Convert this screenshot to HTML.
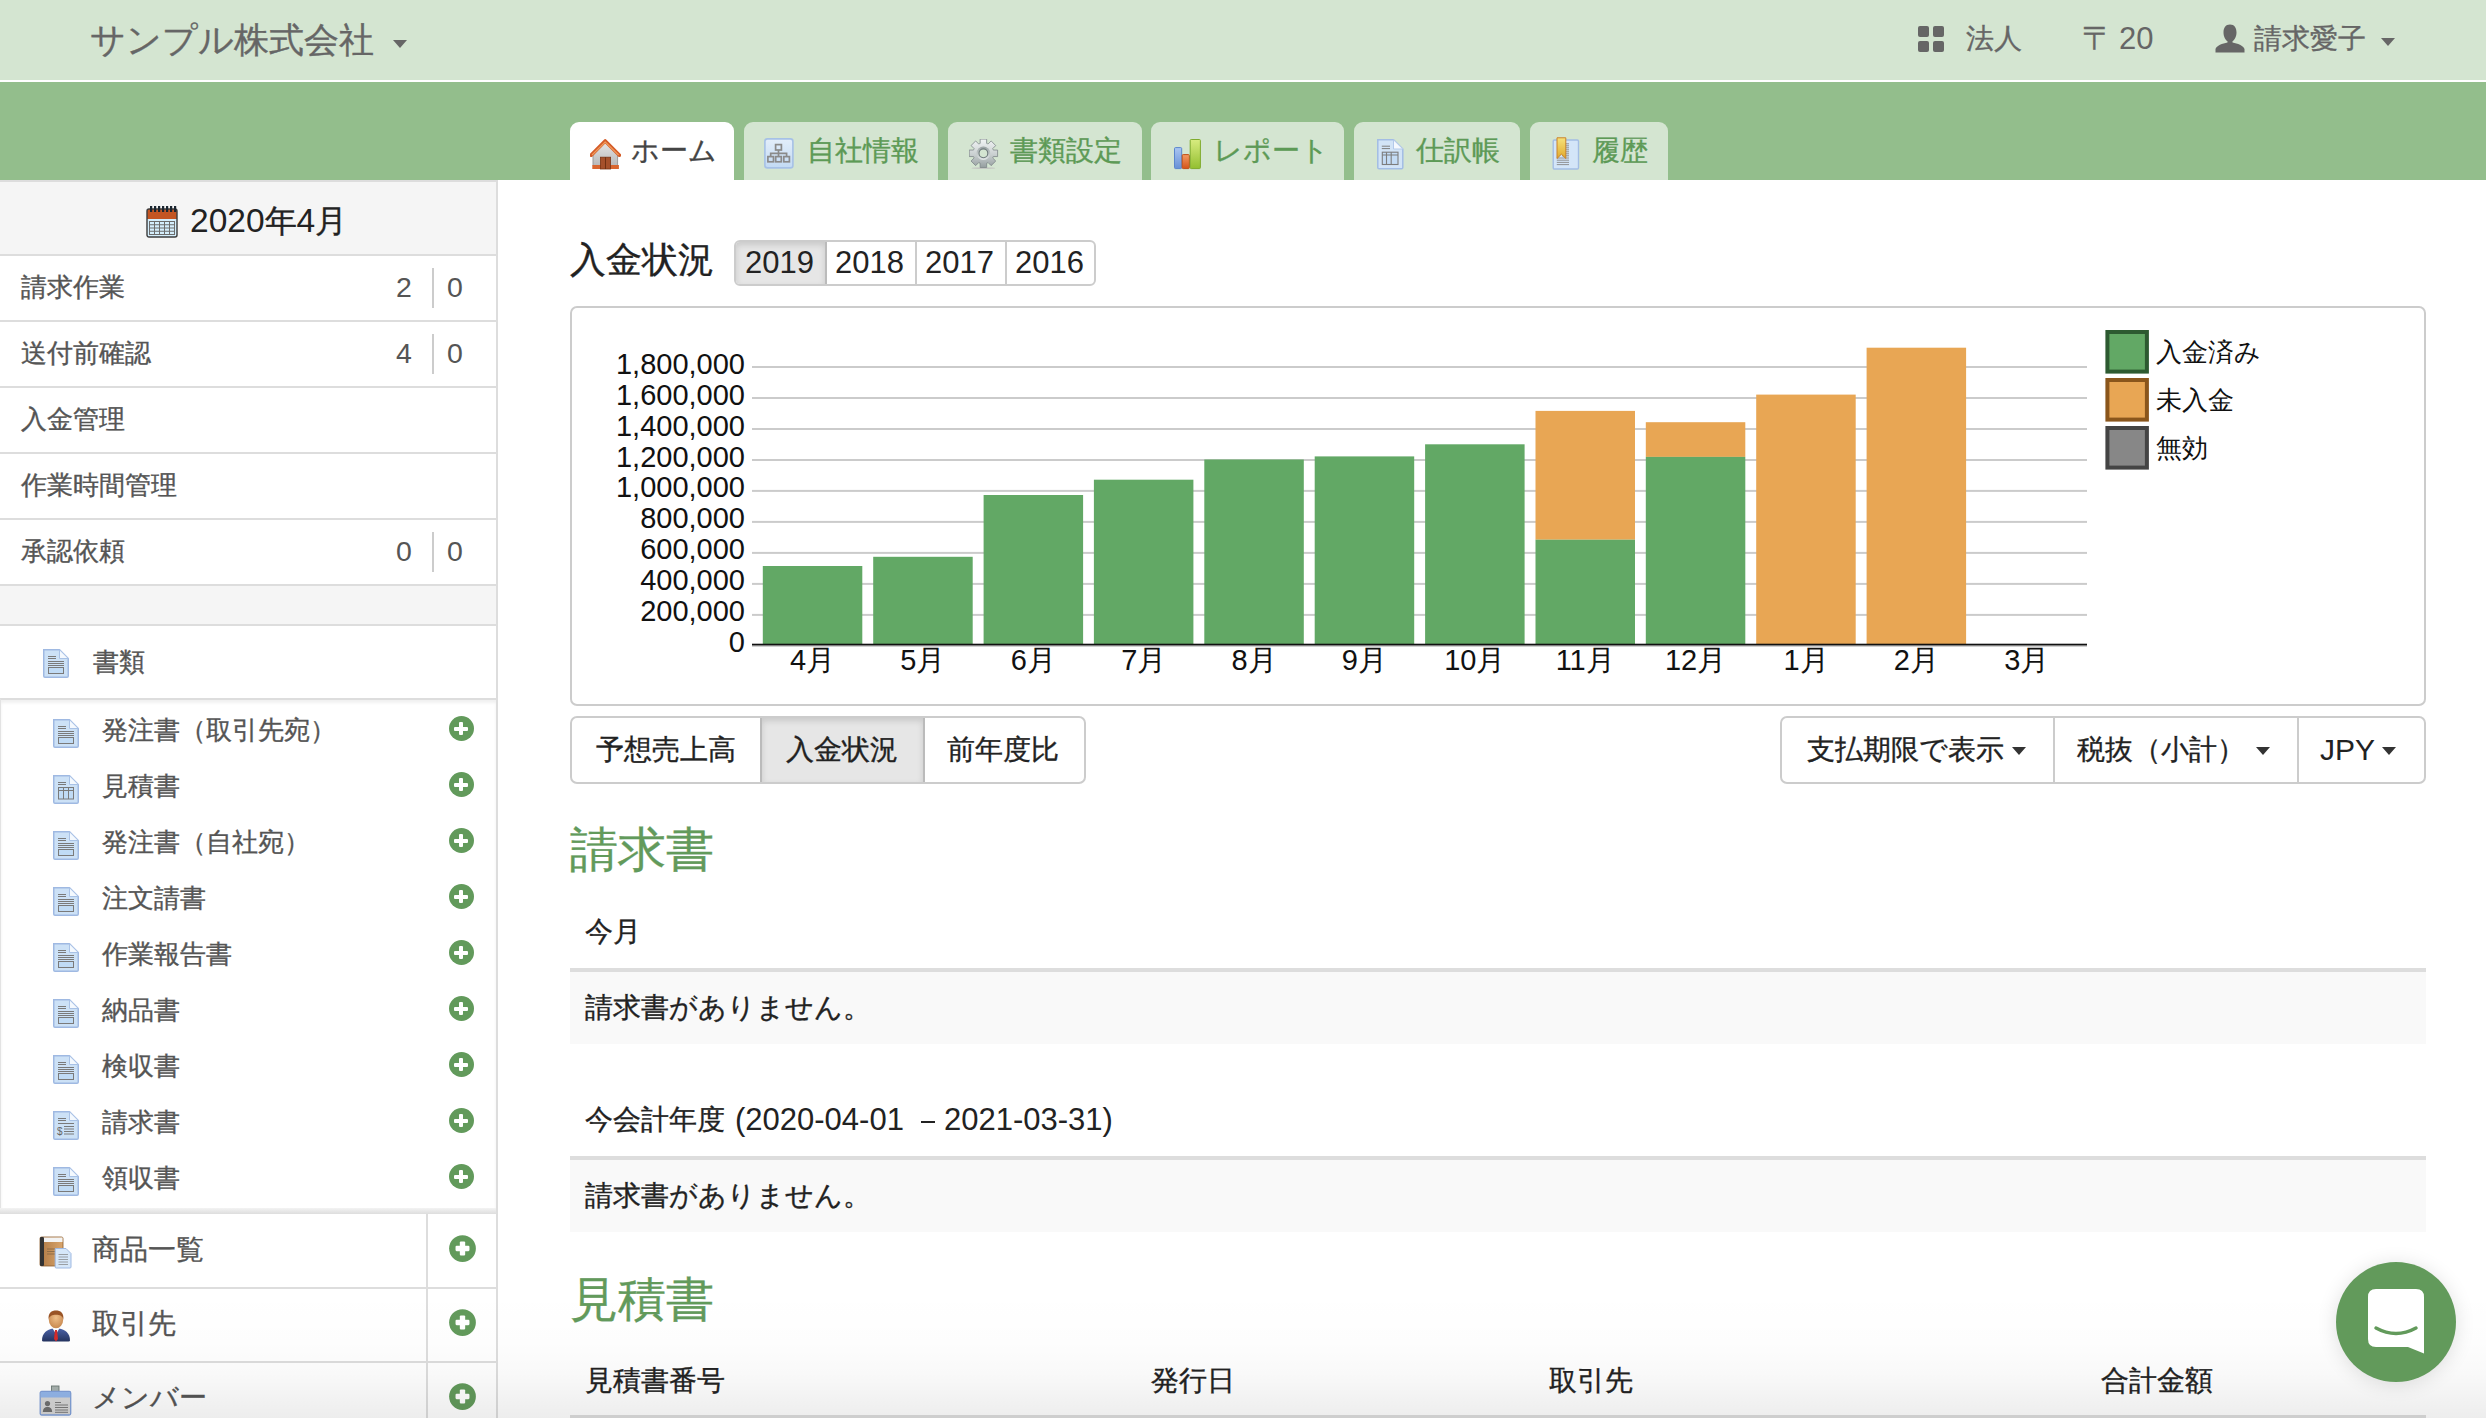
<!DOCTYPE html>
<html><head><meta charset="utf-8">
<style>
*{box-sizing:border-box;margin:0;padding:0}
html,body{width:2486px;height:1418px;overflow:hidden;background:#fff}
body{position:relative;font-family:"Liberation Sans",sans-serif;font-size:28px;color:#333;-webkit-text-stroke:0.35px currentColor}
.abs{position:absolute}
.t{position:absolute;white-space:nowrap;line-height:1}
.tab{position:absolute;top:122px;height:58px;background:#d4e5d1;border-radius:9px 9px 0 0}
.tab.on{background:#fff}
.tabtxt{position:absolute;top:136px;font-size:28px;line-height:30px;color:#5d9a56;white-space:nowrap}
.caret{position:absolute;width:0;height:0;border-left:7.5px solid transparent;border-right:7.5px solid transparent;border-top:8px solid #666}
.hr{position:absolute;left:0;height:2px;background:#ddd}
.srow{position:absolute;left:21px;font-size:26px;line-height:30px;color:#555;white-space:nowrap}
.plus{position:absolute;width:25px;height:25px;border-radius:50%;background:#629a5b}
.plus:before{content:"";position:absolute;left:5.6px;top:10.4px;width:13.6px;height:4.3px;background:#fff;border-radius:1px}
.plus:after{content:"";position:absolute;left:10.3px;top:5.9px;width:4.3px;height:13.3px;background:#fff;border-radius:1px}
.plus.big{transform:scale(1.07)}
.yr{font-size:31px;line-height:30px;color:#222;-webkit-text-stroke:0}
.n{-webkit-text-stroke:0}
.btxt{font-size:28px;line-height:30px;color:#222}
.ax{font-family:"Liberation Sans",sans-serif;font-size:29px;fill:#111;-webkit-text-stroke:0}
.lg{font-family:"Liberation Sans",sans-serif;font-size:26px;fill:#111}
</style></head>
<body>
<div class="abs" style="left:0;top:0;width:2486px;height:80px;background:#d4e5d1"></div>
<div class="abs" style="left:0;top:80px;width:2486px;height:2px;background:#fff"></div>
<div class="abs" style="left:0;top:82px;width:2486px;height:98px;background:#93be8c"></div>
<div class="t" style="left:90px;top:20px;font-size:35px;line-height:40px;color:#666">サンプル株式会社</div>
<div class="caret" style="left:393px;top:40px"></div>
<div class="abs" style="left:1918px;top:26px;width:11px;height:11px;background:#666;border-radius:2px"></div>
<div class="abs" style="left:1933px;top:26px;width:11px;height:11px;background:#666;border-radius:2px"></div>
<div class="abs" style="left:1918px;top:41px;width:11px;height:11px;background:#666;border-radius:2px"></div>
<div class="abs" style="left:1933px;top:41px;width:11px;height:11px;background:#666;border-radius:2px"></div>
<div class="t" style="left:1966px;top:24px;font-size:28px;line-height:30px;color:#666">法人</div>
<div class="t" style="left:2082px;top:23px;font-size:32px;line-height:30px;color:#666">〒</div>
<div class="t n" style="left:2119px;top:24px;font-size:31px;line-height:30px;color:#666">20</div>
<svg class="abs" style="left:2215px;top:24px" width="30" height="29" viewBox="0 0 30 29">
<path d="M15,0.5 C19.5,0.5 21.5,4 21.5,8.5 C21.5,12.5 19.5,16 17.5,17.2 V18.5 C22.5,19.5 28.5,21.5 29.5,25 V28.5 H0.5 V25 C1.5,21.5 7.5,19.5 12.5,18.5 V17.2 C10.5,16 8.5,12.5 8.5,8.5 C8.5,4 10.5,0.5 15,0.5 Z" fill="#666"/>
</svg>
<div class="t" style="left:2254px;top:24px;font-size:28px;line-height:30px;color:#666">請求愛子</div>
<div class="caret" style="left:2381px;top:38px"></div>
<div class="tab on" style="left:570px;width:164px"></div>
<div class="tab" style="left:744px;width:194px"></div>
<div class="tab" style="left:948px;width:194px"></div>
<div class="tab" style="left:1151px;width:193px"></div>
<div class="tab" style="left:1354px;width:166px"></div>
<div class="tab" style="left:1530px;width:138px"></div>
<div class="tabtxt" style="left:631px;color:#444">ホーム</div>
<div class="tabtxt" style="left:807px">自社情報</div>
<div class="tabtxt" style="left:1010px">書類設定</div>
<div class="tabtxt" style="left:1214px">レポート</div>
<div class="tabtxt" style="left:1416px">仕訳帳</div>
<div class="tabtxt" style="left:1592px">履歴</div>
<svg class="abs" style="left:590px;top:137px" width="31" height="33" viewBox="0 0 31 33">
<defs><linearGradient id="wall" x1="0" y1="0" x2="0" y2="1"><stop offset="0" stop-color="#e6e6e6"/><stop offset="1" stop-color="#b9b9b9"/></linearGradient></defs>
<path d="M3,17 L15.2,5 L27.6,17 V28.5 H3 Z" fill="url(#wall)" stroke="#9a9a9a" stroke-width="1"/>
<path d="M1.2,18.2 L15.2,4 L29.4,18.2" fill="none" stroke="#d45b27" stroke-width="3.6" stroke-linejoin="round" stroke-linecap="round"/>
<path d="M2,18 L15.2,5 L28.6,18" fill="none" stroke="#f09a5c" stroke-width="1.2" stroke-linejoin="round"/>
<rect x="2.3" y="28" width="26.6" height="4" fill="#d9662f"/>
<rect x="10.4" y="20.2" width="10.2" height="11.8" fill="#a5502a" stroke="#7a3516" stroke-width="0.8"/>
<path d="M15.5,20.2 V32" stroke="#6a2c10" stroke-width="0.9"/>
</svg>
<svg class="abs" style="left:764px;top:138px" width="30" height="31" viewBox="0 0 30 31">
<defs><linearGradient id="bl" x1="0" y1="0" x2="0" y2="1"><stop offset="0" stop-color="#e3eefa"/><stop offset="1" stop-color="#c2daf3"/></linearGradient></defs>
<rect x="0.9" y="0.9" width="28" height="29" rx="2.5" fill="url(#bl)" stroke="#a6c1e6" stroke-width="1.6"/>
<g fill="none" stroke="#8a8a8a" stroke-width="1.7">
<rect x="11.6" y="6.6" width="5.8" height="5.4"/>
<path d="M14.5,12 V15.3 M6.7,18.6 V15.3 H22.6 V18.6 M14.5,15.3 V18.6"/>
<rect x="3.9" y="18.6" width="5.6" height="5.2"/><rect x="11.7" y="18.6" width="5.6" height="5.2"/><rect x="19.8" y="18.6" width="5.6" height="5.2"/>
</g></svg>
<svg class="abs" style="left:969px;top:139px" width="30" height="31" viewBox="0 0 30 31">
<defs><linearGradient id="gr" x1="0" y1="0" x2="0" y2="1"><stop offset="0" stop-color="#f2f5f5"/><stop offset="0.55" stop-color="#c9cfd0"/><stop offset="1" stop-color="#959e9f"/></linearGradient>
<linearGradient id="gr2" x1="0" y1="0" x2="0" y2="1"><stop offset="0" stop-color="#9aa3a4"/><stop offset="1" stop-color="#e3e8e8"/></linearGradient></defs>
<ellipse cx="14.4" cy="29.2" rx="12" ry="0.9" fill="#b9b3b8" opacity="0.6"/>
<polygon points="11.15,4.42 11.15,0.10 17.65,0.10 17.65,4.42 18.02,4.55 18.38,4.69 18.74,4.85 19.09,5.02 22.14,1.96 26.74,6.56 23.68,9.61 23.85,9.96 24.01,10.32 24.15,10.68 24.28,11.05 28.60,11.05 28.60,17.55 24.28,17.55 24.15,17.92 24.01,18.28 23.85,18.64 23.68,18.99 26.74,22.04 22.14,26.64 19.09,23.58 18.74,23.75 18.38,23.91 18.02,24.05 17.65,24.18 17.65,28.50 11.15,28.50 11.15,24.18 10.78,24.05 10.42,23.91 10.06,23.75 9.71,23.58 6.66,26.64 2.06,22.04 5.12,18.99 4.95,18.64 4.79,18.28 4.65,17.92 4.52,17.55 0.20,17.55 0.20,11.05 4.52,11.05 4.65,10.68 4.79,10.32 4.95,9.96 5.12,9.61 2.06,6.56 6.66,1.96 9.71,5.02 10.06,4.85 10.42,4.69 10.78,4.55" fill="url(#gr)" stroke="#7d8789" stroke-width="0.8" stroke-linejoin="round"/>
<circle cx="14.4" cy="14.3" r="6.8" fill="url(#gr2)"/>
<circle cx="14.4" cy="14.3" r="4.4" fill="#d4e5d1" stroke="#6f7a7c" stroke-width="1.1"/>
</svg>
<svg class="abs" style="left:1173px;top:138px" width="29" height="32" viewBox="0 0 29 32">
<defs><linearGradient id="b1" x1="0" y1="0" x2="0" y2="1"><stop offset="0" stop-color="#aac6f2"/><stop offset="1" stop-color="#6790d6"/></linearGradient>
<linearGradient id="b2" x1="0" y1="0" x2="0" y2="1"><stop offset="0" stop-color="#f39a62"/><stop offset="1" stop-color="#d4541a"/></linearGradient>
<linearGradient id="b3" x1="0" y1="0" x2="0" y2="1"><stop offset="0" stop-color="#d8ec80"/><stop offset="1" stop-color="#93bf30"/></linearGradient></defs>
<rect x="1.5" y="9.6" width="7.2" height="21" rx="1" fill="url(#b1)" stroke="#5b86cc" stroke-width="1"/>
<rect x="9.2" y="16.6" width="7.2" height="14" rx="1" fill="url(#b2)" stroke="#c04e16" stroke-width="1"/>
<rect x="17.2" y="1.5" width="10.2" height="29.1" rx="1" fill="url(#b3)" stroke="#7fab2c" stroke-width="1"/>
</svg>
<svg class="abs" style="left:1377px;top:139px" width="27" height="31" viewBox="0 0 27 31">
<path d="M0.8,0.8 H16.5 L25.8,10 V28.5 Q25.8,29.8 24.5,29.8 H2.1 Q0.8,29.8 0.8,28.5 Z" fill="#d2e4f7" stroke="#a3bde4" stroke-width="1.5"/>
<path d="M16.5,0.8 V10 H25.8 Z" fill="#f5f9fe" stroke="#b3c9ea" stroke-width="1"/>
<path d="M4.8,7.2 H13 M4.8,9.6 H13" stroke="#7d7d7d" stroke-width="1"/>
<rect x="5.3" y="13.2" width="15.7" height="12.3" fill="#c4dcf5" stroke="#7d7d7d" stroke-width="1.1"/>
<path d="M5.3,16 H21 M9.5,13.2 V25.5 M14.2,13.2 V25.5" stroke="#7d7d7d" stroke-width="1.1"/>
</svg>
<svg class="abs" style="left:1552px;top:137px" width="28" height="33" viewBox="0 0 28 33">
<defs><linearGradient id="rb" x1="0" y1="0" x2="0" y2="1"><stop offset="0" stop-color="#f6e27a"/><stop offset="1" stop-color="#e0a92c"/></linearGradient></defs>
<rect x="1.2" y="3" width="25.3" height="29" rx="1.2" fill="#d3e5f8" stroke="#a3bde4" stroke-width="1.4"/>
<path d="M10,6.8 H17 M10,8.8 H17 M10,10.8 H17 M10,12.8 H17 M10,14.8 H17 M10,16.8 H17 M10,18.8 H17 M4.8,21 H17 M4.8,23.2 H17 M4.8,25.4 H17 M4.8,27.6 H17" stroke="#888" stroke-width="0.9"/>
<path d="M5,0.8 H13.8 V21.5 L9.4,17.2 L5,21.5 Z" fill="url(#rb)" stroke="#c9822a" stroke-width="1"/>
</svg>
<div class="abs" style="left:496px;top:180px;width:2px;height:1238px;background:#ddd"></div>
<svg width="0" height="0" style="position:absolute">
<defs>
<symbol id="doc" viewBox="0 0 26 29">
<path d="M0.75,0.75 H16.5 L25.25,9.5 V27 Q25.25,28.25 24,28.25 H2 Q0.75,28.25 0.75,27 Z" fill="#cce1f6" stroke="#9fb9e2" stroke-width="1.5"/>
<path d="M16.5,0.75 V9.5 H25.25 Z" fill="#f4f9fe" stroke="#a9c2e6" stroke-width="1"/>
<path d="M5,7.5 H13 M5,9.5 H13 M5,12.5 H21 M5,14.5 H21 M5,16.5 H21" stroke="#7a7a7a" stroke-width="1"/>
<rect x="5.5" y="18.5" width="15" height="6" fill="#c0dbf5" stroke="#7a7a7a" stroke-width="1"/>
</symbol>
<symbol id="doccal" viewBox="0 0 26 29">
<path d="M0.75,0.75 H16.5 L25.25,9.5 V27 Q25.25,28.25 24,28.25 H2 Q0.75,28.25 0.75,27 Z" fill="#cce1f6" stroke="#9fb9e2" stroke-width="1.5"/>
<path d="M16.5,0.75 V9.5 H25.25 Z" fill="#f4f9fe" stroke="#a9c2e6" stroke-width="1"/>
<path d="M5,7.5 H13 M5,9.5 H13" stroke="#7a7a7a" stroke-width="1"/>
<rect x="5.5" y="12.5" width="15" height="11.5" fill="#c0dbf5" stroke="#7a7a7a" stroke-width="1"/>
<path d="M5.5,15.5 H20.5 M10.5,12.5 V24 M15.5,12.5 V24" stroke="#7a7a7a" stroke-width="1"/>
</symbol>
<symbol id="docinv" viewBox="0 0 26 29">
<path d="M0.75,0.75 H16.5 L25.25,9.5 V27 Q25.25,28.25 24,28.25 H2 Q0.75,28.25 0.75,27 Z" fill="#cce1f6" stroke="#9fb9e2" stroke-width="1.5"/>
<path d="M16.5,0.75 V9.5 H25.25 Z" fill="#f4f9fe" stroke="#a9c2e6" stroke-width="1"/>
<path d="M5,7.5 H13 M5,9.5 H13 M5,12.5 H21 M11,15.5 H21 M11,18 H21 M11,20.5 H21 M11,23 H21" stroke="#7a7a7a" stroke-width="1"/>
<text x="4" y="23.5" font-size="10" fill="#666" font-family="Liberation Sans">$</text>
</symbol>
</defs></svg>
<div class="hr" style="top:180px;width:496px"></div>
<div class="abs" style="left:0;top:182px;width:496px;height:72px;background:#f5f5f5"></div>
<div class="hr" style="top:254px;width:496px"></div>
<svg class="abs" style="left:146px;top:205px" width="32" height="33" viewBox="0 0 32 33">
<rect x="1" y="4" width="30" height="28" rx="2" fill="#d4eefc"/>
<path d="M1,6 Q1,4 3,4 H29 Q31,4 31,6 V14 H1 Z" fill="#c45522"/>
<rect x="1" y="4" width="30" height="28" rx="2" fill="none" stroke="#3c3c3c" stroke-width="1.4"/>
<g fill="#1b2630"><rect x="4" y="1" width="2.2" height="6"/><rect x="8" y="1" width="2.2" height="6"/><rect x="12" y="1" width="2.2" height="6"/><rect x="16" y="1" width="2.2" height="6"/><rect x="20" y="1" width="2.2" height="6"/><rect x="24" y="1" width="2.2" height="6"/><rect x="28" y="1" width="2.2" height="6"/></g>
<g fill="none" stroke="#6c6c6c" stroke-width="1"><rect x="3.5" y="16.5" width="25" height="13"/><path d="M3.5,19.75 H28.5 M3.5,23 H28.5 M3.5,26.25 H28.5 M8.5,16.5 V29.5 M13.5,16.5 V29.5 M18.5,16.5 V29.5 M23.5,16.5 V29.5"/></g>
</svg>
<div class="t n" style="left:190px;top:204px;font-size:33.5px;line-height:34px;color:#222">2020<span style="font-size:32px;-webkit-text-stroke:0.35px currentColor">年</span>4<span style="font-size:32px;-webkit-text-stroke:0.35px currentColor">月</span></div>
<div class="srow" style="top:272px">請求作業</div>
<div class="t n" style="left:396px;top:272px;font-size:28.5px;line-height:30px;color:#555">2</div>
<div class="abs" style="left:432px;top:268px;width:2px;height:40px;background:#ccc"></div>
<div class="t n" style="left:447px;top:272px;font-size:28.5px;line-height:30px;color:#555">0</div>
<div class="hr" style="top:320px;width:496px"></div>
<div class="srow" style="top:338px">送付前確認</div>
<div class="t n" style="left:396px;top:338px;font-size:28.5px;line-height:30px;color:#555">4</div>
<div class="abs" style="left:432px;top:334px;width:2px;height:40px;background:#ccc"></div>
<div class="t n" style="left:447px;top:338px;font-size:28.5px;line-height:30px;color:#555">0</div>
<div class="hr" style="top:386px;width:496px"></div>
<div class="srow" style="top:404px">入金管理</div>
<div class="hr" style="top:452px;width:496px"></div>
<div class="srow" style="top:470px">作業時間管理</div>
<div class="hr" style="top:518px;width:496px"></div>
<div class="srow" style="top:536px">承認依頼</div>
<div class="t n" style="left:396px;top:536px;font-size:28.5px;line-height:30px;color:#555">0</div>
<div class="abs" style="left:432px;top:532px;width:2px;height:40px;background:#ccc"></div>
<div class="t n" style="left:447px;top:536px;font-size:28.5px;line-height:30px;color:#555">0</div>
<div class="hr" style="top:584px;width:496px"></div>
<div class="abs" style="left:0;top:586px;width:496px;height:38px;background:#f5f5f5"></div>
<div class="hr" style="top:624px;width:496px"></div>
<svg class="abs" style="left:43px;top:649px" width="26" height="29"><use href="#doc"/></svg>
<div class="srow" style="left:93px;top:647px">書類</div>
<div class="abs" style="left:0;top:698px;width:496px;height:512px;border-top:2px solid #ddd;border-left:1px solid #e3e3e3;box-shadow:inset 0 3px 3px rgba(0,0,0,0.06)"></div>
<svg class="abs" style="left:53px;top:719px" width="26" height="29"><use href="#doc"/></svg>
<div class="srow" style="left:102px;top:715.0px">発注書（取引先宛）</div>
<div class="plus" style="left:448.5px;top:716.3px"></div>
<svg class="abs" style="left:53px;top:775px" width="26" height="29"><use href="#doccal"/></svg>
<div class="srow" style="left:102px;top:771.0px">見積書</div>
<div class="plus" style="left:448.5px;top:772.3px"></div>
<svg class="abs" style="left:53px;top:831px" width="26" height="29"><use href="#doc"/></svg>
<div class="srow" style="left:102px;top:827.0px">発注書（自社宛）</div>
<div class="plus" style="left:448.5px;top:828.3px"></div>
<svg class="abs" style="left:53px;top:887px" width="26" height="29"><use href="#doc"/></svg>
<div class="srow" style="left:102px;top:883.0px">注文請書</div>
<div class="plus" style="left:448.5px;top:884.3px"></div>
<svg class="abs" style="left:53px;top:943px" width="26" height="29"><use href="#doc"/></svg>
<div class="srow" style="left:102px;top:939.0px">作業報告書</div>
<div class="plus" style="left:448.5px;top:940.3px"></div>
<svg class="abs" style="left:53px;top:999px" width="26" height="29"><use href="#doc"/></svg>
<div class="srow" style="left:102px;top:995.0px">納品書</div>
<div class="plus" style="left:448.5px;top:996.3px"></div>
<svg class="abs" style="left:53px;top:1055px" width="26" height="29"><use href="#doc"/></svg>
<div class="srow" style="left:102px;top:1051.0px">検収書</div>
<div class="plus" style="left:448.5px;top:1052.3px"></div>
<svg class="abs" style="left:53px;top:1111px" width="26" height="29"><use href="#docinv"/></svg>
<div class="srow" style="left:102px;top:1107.0px">請求書</div>
<div class="plus" style="left:448.5px;top:1108.3px"></div>
<svg class="abs" style="left:53px;top:1167px" width="26" height="29"><use href="#doc"/></svg>
<div class="srow" style="left:102px;top:1163.0px">領収書</div>
<div class="plus" style="left:448.5px;top:1164.3px"></div>
<div class="abs" style="left:0;top:1208px;width:496px;height:6px;background:linear-gradient(#f3f3f3,#ddd)"></div>
<div class="abs" style="left:426px;top:1214px;width:2px;height:204px;background:#ddd"></div>
<div class="hr" style="top:1287px;width:496px"></div>
<div class="hr" style="top:1361px;width:496px"></div>
<div class="srow" style="left:92px;top:1235px;font-size:28px">商品一覧</div>
<div class="srow" style="left:92px;top:1309px;font-size:28px">取引先</div>
<div class="srow" style="left:92px;top:1383px;font-size:28px">メンバー</div>
<div class="plus big" style="left:449.5px;top:1235.5px"></div>
<div class="plus big" style="left:449.5px;top:1309.5px"></div>
<div class="plus big" style="left:449.5px;top:1383.5px"></div>
<svg class="abs" style="left:39px;top:1236px" width="33" height="33" viewBox="0 0 33 33">
<defs><linearGradient id="bk" x1="0" y1="0" x2="1" y2="0"><stop offset="0" stop-color="#b07a45"/><stop offset="1" stop-color="#d9a56c"/></linearGradient></defs>
<rect x="1" y="1" width="23" height="29" rx="1.5" fill="url(#bk)" stroke="#8a5a2b" stroke-width="0.8"/>
<rect x="4" y="1.5" width="19.5" height="4.5" fill="#f4f4f4"/>
<rect x="1" y="1" width="4" height="29" rx="1.2" fill="#333"/>
<path d="M8,13 H18 M8,15.5 H18 M8,18 H16" stroke="#8a6a45" stroke-width="0.9"/>
<path d="M16.2,12.5 H27 L32,17.5 V31 Q32,32 31,32 H17.2 Q16.2,32 16.2,31 Z" fill="#d6e7f9" stroke="#9fb9e2" stroke-width="1"/>
<path d="M19.5,18.5 H29 M19.5,21 H29 M19.5,23.5 H29 M19.5,26 H29 M19.5,28.5 H29" stroke="#808080" stroke-width="0.7"/>
</svg>
<svg class="abs" style="left:41px;top:1310px" width="30" height="32" viewBox="0 0 30 32">
<defs><radialGradient id="fc" cx="0.5" cy="0.4" r="0.6"><stop offset="0" stop-color="#f0c08a"/><stop offset="1" stop-color="#c98a50"/></radialGradient>
<linearGradient id="st" x1="0" y1="0" x2="0" y2="1"><stop offset="0" stop-color="#4a62a8"/><stop offset="1" stop-color="#24335f"/></linearGradient></defs>
<path d="M1,30.5 C1,23 6,19.5 12,18.5 H18 C24,19.5 29,23 29,30.5 Q29,31.5 27.5,31.5 H2.5 Q1,31.5 1,30.5 Z" fill="url(#st)"/>
<path d="M11,17.5 L15,24 L19,17.5 Z" fill="#fff"/>
<path d="M14,20 H16 L17,29 L15,31.5 L13,29 Z" fill="#d42a2a"/>
<ellipse cx="15" cy="9.5" rx="7.2" ry="8.8" fill="url(#fc)"/>
<path d="M7.6,9.5 C7,3 10.5,0.6 15,0.6 C19.5,0.6 23,3 22.4,9.5 C21.5,6 19,4.8 15,4.8 C11,4.8 8.5,6 7.6,9.5 Z" fill="#9a5426"/>
</svg>
<svg class="abs" style="left:39px;top:1385px" width="33" height="31" viewBox="0 0 33 31">
<rect x="12.5" y="1" width="7.5" height="8" fill="#a9b3b0" stroke="#6d7a76" stroke-width="0.9"/>
<rect x="1.2" y="6.5" width="30.5" height="23.5" rx="1.5" fill="#d6d6d6" stroke="#7f9fd8" stroke-width="1.3"/>
<rect x="1.8" y="7" width="29.3" height="5.5" fill="#93b6ea"/>
<circle cx="8.5" cy="18.5" r="2.6" fill="#707070"/>
<path d="M3.8,27 Q4,22 8.5,21.8 Q13,22 13.2,27 Z" fill="#707070"/>
<path d="M16,17.5 H22 M16,20 H29 M16,22.5 H29 M16,25 H29 M16,27.3 H29" stroke="#7a7a7a" stroke-width="1"/>
</svg>
<div class="t" style="left:570px;top:242px;font-size:36px;line-height:36px;color:#222">入金状況</div>
<div class="abs" style="left:734px;top:240px;width:362px;height:46px;border:2px solid #ccc;border-radius:6px;overflow:hidden;background:#fff">
 <div class="abs" style="left:0;top:0;width:91px;height:42px;background:#e6e6e6;box-shadow:inset 0 3px 6px rgba(0,0,0,0.13);border-right:2px solid #bbb"></div>
 <div class="abs" style="left:179px;top:0;width:2px;height:42px;background:#ccc"></div>
 <div class="abs" style="left:269px;top:0;width:2px;height:42px;background:#ccc"></div>
</div>
<div class="t yr" style="left:745px;top:248px">2019</div>
<div class="t yr" style="left:835px;top:248px">2018</div>
<div class="t yr" style="left:925px;top:248px">2017</div>
<div class="t yr" style="left:1015px;top:248px">2016</div>
<div class="abs" style="left:570px;top:306px;width:1856px;height:400px;border:2px solid #ccc;border-radius:7px"></div>
<svg class="abs" style="left:0;top:0" width="2486" height="1418" viewBox="0 0 2486 1418">
<rect x="752" y="644.9" width="1335" height="2" fill="#cbcbcb"/>
<rect x="752" y="613.9" width="1335" height="2" fill="#cbcbcb"/>
<rect x="752" y="582.9" width="1335" height="2" fill="#cbcbcb"/>
<rect x="752" y="551.9" width="1335" height="2" fill="#cbcbcb"/>
<rect x="752" y="520.9" width="1335" height="2" fill="#cbcbcb"/>
<rect x="752" y="489.9" width="1335" height="2" fill="#cbcbcb"/>
<rect x="752" y="459.0" width="1335" height="2" fill="#cbcbcb"/>
<rect x="752" y="428.0" width="1335" height="2" fill="#cbcbcb"/>
<rect x="752" y="397.0" width="1335" height="2" fill="#cbcbcb"/>
<rect x="752" y="366.0" width="1335" height="2" fill="#cbcbcb"/>
<text x="745" y="652.4" text-anchor="end" class="ax">0</text>
<text x="745" y="621.4" text-anchor="end" class="ax">200,000</text>
<text x="745" y="590.4" text-anchor="end" class="ax">400,000</text>
<text x="745" y="559.4" text-anchor="end" class="ax">600,000</text>
<text x="745" y="528.4" text-anchor="end" class="ax">800,000</text>
<text x="745" y="497.4" text-anchor="end" class="ax">1,000,000</text>
<text x="745" y="466.5" text-anchor="end" class="ax">1,200,000</text>
<text x="745" y="435.5" text-anchor="end" class="ax">1,400,000</text>
<text x="745" y="404.5" text-anchor="end" class="ax">1,600,000</text>
<text x="745" y="373.5" text-anchor="end" class="ax">1,800,000</text>
<rect x="762.8" y="566.0" width="99.5" height="78.5" fill="#62a865"/>
<text x="812.5" y="670" text-anchor="middle" class="ax">4月</text>
<rect x="873.2" y="556.8" width="99.5" height="87.7" fill="#62a865"/>
<text x="922.9" y="670" text-anchor="middle" class="ax">5月</text>
<rect x="983.6" y="495.0" width="99.5" height="149.5" fill="#62a865"/>
<text x="1033.3" y="670" text-anchor="middle" class="ax">6月</text>
<rect x="1093.9" y="479.7" width="99.5" height="164.8" fill="#62a865"/>
<text x="1143.7" y="670" text-anchor="middle" class="ax">7月</text>
<rect x="1204.3" y="459.5" width="99.5" height="185.0" fill="#62a865"/>
<text x="1254.1" y="670" text-anchor="middle" class="ax">8月</text>
<rect x="1314.7" y="456.4" width="99.5" height="188.1" fill="#62a865"/>
<text x="1364.4" y="670" text-anchor="middle" class="ax">9月</text>
<rect x="1425.1" y="444.3" width="99.5" height="200.2" fill="#62a865"/>
<text x="1474.8" y="670" text-anchor="middle" class="ax">10月</text>
<rect x="1535.5" y="410.9" width="99.5" height="128.8" fill="#e8a654"/>
<rect x="1535.5" y="539.7" width="99.5" height="104.8" fill="#62a865"/>
<text x="1585.2" y="670" text-anchor="middle" class="ax">11月</text>
<rect x="1645.8" y="422.2" width="99.5" height="34.7" fill="#e8a654"/>
<rect x="1645.8" y="456.9" width="99.5" height="187.6" fill="#62a865"/>
<text x="1695.6" y="670" text-anchor="middle" class="ax">12月</text>
<rect x="1756.2" y="394.6" width="99.5" height="249.9" fill="#e8a654"/>
<text x="1806.0" y="670" text-anchor="middle" class="ax">1月</text>
<rect x="1866.6" y="347.7" width="99.5" height="296.8" fill="#e8a654"/>
<text x="1916.3" y="670" text-anchor="middle" class="ax">2月</text>
<text x="2026.7" y="670" text-anchor="middle" class="ax">3月</text>
<rect x="752" y="643.7" width="1335" height="1.7" fill="#111"/>
<rect x="2107.4" y="332" width="39.5" height="39.6" fill="#62a865" stroke="#2d5a31" stroke-width="4"/>
<text x="2156" y="361" class="lg">入金済み</text>
<rect x="2107.4" y="380" width="39.5" height="39.6" fill="#e8a654" stroke="#8a561c" stroke-width="4"/>
<text x="2156" y="409" class="lg">未入金</text>
<rect x="2107.4" y="428" width="39.5" height="39.6" fill="#878787" stroke="#444" stroke-width="4"/>
<text x="2156" y="457" class="lg">無効</text>
</svg>
<div class="abs" style="left:570px;top:716px;width:516px;height:68px;border:2px solid #ccc;border-radius:7px;overflow:hidden">
 <div class="abs" style="left:188px;top:0;width:165px;height:64px;background:#e6e6e6;border-left:2px solid #bbb;border-right:2px solid #bbb;box-shadow:inset 0 3px 6px rgba(0,0,0,0.13)"></div>
</div>
<div class="t btxt" style="left:596px;top:735px">予想売上高</div>
<div class="t btxt" style="left:786px;top:735px">入金状況</div>
<div class="t btxt" style="left:947px;top:735px">前年度比</div>
<div class="abs" style="left:1780px;top:716px;width:646px;height:68px;border:2px solid #ccc;border-radius:7px">
 <div class="abs" style="left:271px;top:0;width:2px;height:64px;background:#ccc"></div>
 <div class="abs" style="left:515px;top:0;width:2px;height:64px;background:#ccc"></div>
</div>
<div class="t btxt" style="left:1807px;top:735px">支払期限で表示</div>
<div class="caret" style="left:2012px;top:747px;border-top-color:#333"></div>
<div class="t btxt" style="left:2077px;top:735px">税抜（小計）</div>
<div class="caret" style="left:2256px;top:747px;border-top-color:#333"></div>
<div class="t btxt n" style="left:2320px;top:735px;font-size:30px">JPY</div>
<div class="caret" style="left:2382px;top:747px;border-top-color:#333"></div>

<div class="t" style="left:570px;top:824px;font-size:48px;line-height:52px;color:#629a5b">請求書</div>
<div class="t btxt" style="left:585px;top:917px">今月</div>
<div class="abs" style="left:570px;top:968px;width:1856px;height:4px;background:#ddd"></div>
<div class="abs" style="left:570px;top:972px;width:1856px;height:72px;background:#f9f9f9"></div>
<div class="t btxt" style="left:585px;top:993px">請求書がありません。</div>

<div class="t btxt" style="left:585px;top:1105px">今会計年度</div>
<div class="t btxt n" style="left:735px;top:1105px;font-size:31px">(2020-04-01</div>
<div class="abs" style="left:921px;top:1121px;width:14px;height:2px;background:#222"></div>
<div class="t btxt n" style="left:944px;top:1105px;font-size:31px">2021-03-31)</div>
<div class="abs" style="left:570px;top:1156px;width:1856px;height:4px;background:#ddd"></div>
<div class="abs" style="left:570px;top:1160px;width:1856px;height:72px;background:#f9f9f9"></div>
<div class="t btxt" style="left:585px;top:1181px">請求書がありません。</div>

<div class="t" style="left:570px;top:1274px;font-size:48px;line-height:52px;color:#629a5b">見積書</div>
<div class="t btxt" style="left:585px;top:1366px">見積書番号</div>
<div class="t btxt" style="left:1151px;top:1366px">発行日</div>
<div class="t btxt" style="left:1549px;top:1366px">取引先</div>
<div class="t btxt" style="left:2101px;top:1366px">合計金額</div>
<div class="abs" style="left:570px;top:1415px;width:1856px;height:4px;background:#ddd"></div>

<div class="abs" style="left:0;top:1290px;width:2486px;height:128px;background:linear-gradient(rgba(0,0,0,0) 0%,rgba(0,0,0,0.008) 40%,rgba(0,0,0,0.025) 65%,rgba(0,0,0,0.07) 100%)"></div>

<div class="abs" style="left:2336px;top:1262px;width:120px;height:120px;border-radius:50%;background:#629a5b;box-shadow:0 2px 20px rgba(0,0,0,0.12)"></div>
<svg class="abs" style="left:2368px;top:1289px" width="57" height="65" viewBox="0 0 57 65">
<path d="M8,0 H48 Q56,0 56,8 V64.5 L40,58 H8 Q0,58 0,50 V8 Q0,0 8,0 Z" fill="#fff"/>
<path d="M8,39 Q28,50 48,39" fill="none" stroke="#629a5b" stroke-width="3.5" stroke-linecap="round"/>
</svg>
</body></html>
